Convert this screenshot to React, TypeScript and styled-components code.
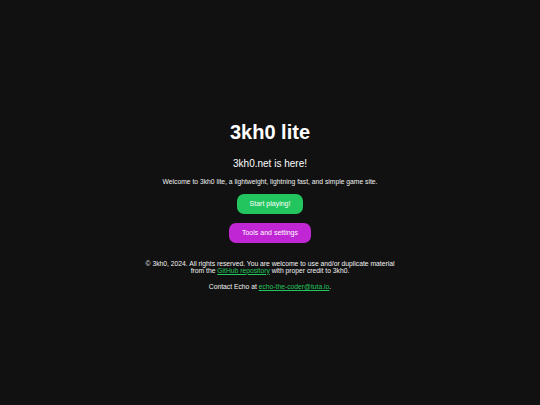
import { FC } from 'react'
import styled, { createGlobalStyle } from 'styled-components'

const GlobalStyle = createGlobalStyle`
    html, body {
        margin: 0;
        padding: 0;
        background-color: #111111;
        color: #ffffff;
        font-family: 'Liberation Sans', Arial, sans-serif;
    }
`
const Page = styled.main`
    display: flex;
    flex-direction: column;
    justify-content: center;
    align-items: center;
    min-height: 100vh;
    box-sizing: border-box;
    padding-top: 5px;
    text-align: center;
`
const Title = styled.h1`
    font-size: 20px;
    font-weight: 700;
    line-height: 23px;
    margin: 0 0 14px;
`
const Subtitle = styled.h2`
    font-size: 10px;
    font-weight: 400;
    line-height: 12px;
    margin: 0 0 8px;
`
const Text = styled.p`
    font-size: 6.75px;
    line-height: 7px;
    margin: 0;
    color: #f2f2f2;
`
const Actions = styled.div`
    display: flex;
    flex-direction: column;
    align-items: center;
    gap: 9px;
    margin: 9px 0 17px;
`
const Button = styled.a<{ $color: string }>`
    display: inline-flex;
    align-items: center;
    justify-content: center;
    padding: 6px 13px;
    height: 20px;
    box-sizing: border-box;
    border-radius: 7px;
    background-color: ${p => p.$color};
    color: #fff;
    font-size: 7px;
    line-height: 8px;
    text-decoration: none;
    cursor: pointer;
`
const Footer = styled.footer`
    display: flex;
    flex-direction: column;
    gap: 9px;
`
const Green = styled.a`
    color: #22c55e;
    text-decoration: underline;
`

const App: FC = () => {
    return (
        <>
            <GlobalStyle />
            <Page>
                <Title>3kh0 lite</Title>
                <Subtitle>3kh0.net is here!</Subtitle>
                <Text>Welcome to 3kh0 lite, a lightweight, lightning fast, and simple game site.</Text>
                <Actions>
                    <Button $color="#22c55e">Start playing!</Button>
                    <Button $color="#c026d3">Tools and settings</Button>
                </Actions>
                <Footer>
                    <Text>
                        © 3kh0, 2024. All rights reserved. You are welcome to use and/or duplicate material
                        <br />
                        from the <Green>GitHub repository</Green> with proper credit to 3kh0.
                    </Text>
                    <Text>
                        Contact Echo at <Green>echo-the-coder@tuta.io</Green>.
                    </Text>
                </Footer>
            </Page>
        </>
    )
}

export default App
